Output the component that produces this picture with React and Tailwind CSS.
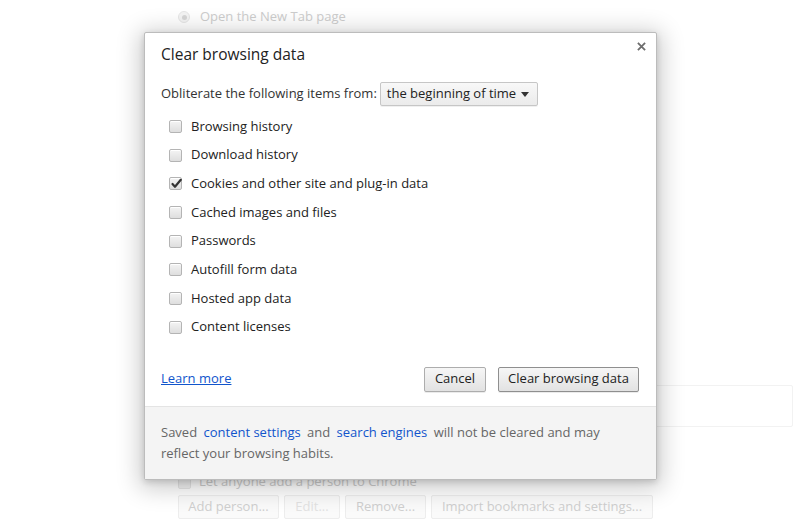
import React from 'react';

const items = [
  { label: 'Browsing history', checked: false },
  { label: 'Download history', checked: false },
  { label: 'Cookies and other site and plug-in data', checked: true },
  { label: 'Cached images and files', checked: false },
  { label: 'Passwords', checked: false },
  { label: 'Autofill form data', checked: false },
  { label: 'Hosted app data', checked: false },
  { label: 'Content licenses', checked: false },
];

const Checkbox = ({ checked }) => (
  <span className="relative w-[13px] h-[13px] rounded-[2px] border border-[#b4b4b4] bg-gradient-to-b from-[#f4f4f4] to-[#dedede] shadow-[inset_0_1px_0_#fff]">
    {checked && (
      <svg viewBox="0 0 13 13" className="absolute left-[0px] top-[-1px] w-[13px] h-[13px]">
        <path d="M2.5 7 L5 9.8 L10.8 2.8" fill="none" stroke="#333" strokeWidth="2.2" strokeLinecap="round" strokeLinejoin="round" />
      </svg>
    )}
  </span>
);

const FadedButton = ({ children, w }) => (
  <div className={`h-[24px] ${w} flex items-center justify-center border border-[#ededed] rounded-[2px] bg-[#fafafa] text-[#cfcfcf]`}>
    {children}
  </div>
);

const App = () => {
  return (
    <div className="relative w-[800px] h-[530px] overflow-hidden bg-white text-[13px] font-['Open_Sans',sans-serif]">
      {/* page behind the dialog */}
      <div className="pl-[178px] pt-[11px] text-[#cdcdcd]">
        <div className="flex items-center h-[12px]">
          <span className="w-[12px] h-[12px] rounded-full border border-[#e6e6e6] bg-[#f4f4f4] flex items-center justify-center">
            <span className="w-[5px] h-[5px] rounded-full bg-[#d6d6d6]" />
          </span>
          <span className="ml-[10px]">Open the New Tab page</span>
        </div>
        <div className="mt-[362px] ml-[477px] w-[138px] h-[42px] border border-[#f2f2f2] rounded-[2px]" />
        <div className="mt-[49px] flex items-center h-[12px]">
          <span className="w-[13px] h-[13px] rounded-[2px] border border-[#e6e6e6] bg-[#f2f2f2]" />
          <span className="ml-[8px]">Let anyone add a person to Chrome</span>
        </div>
        <div className="mt-[7px] flex gap-[5px]">
          <FadedButton w="w-[101px]">Add person...</FadedButton>
          <FadedButton w="w-[56px]"><span className="text-[#e2e2e2]">Edit...</span></FadedButton>
          <FadedButton w="w-[81px]">Remove...</FadedButton>
          <FadedButton w="w-[222px]">Import bookmarks and settings...</FadedButton>
        </div>
      </div>

      {/* dialog */}
      <div className="absolute left-[144px] top-[32px] w-[513px] bg-white border border-[#bcbcbc] rounded-[2px] shadow-[0_4px_23px_5px_rgba(0,0,0,0.2),0_2px_6px_rgba(0,0,0,0.15)] text-[#333]">
        <button className="absolute right-[8px] top-[6px] w-[14px] h-[14px] flex items-center justify-center">
          <svg viewBox="0 0 10 10" className="w-[9px] h-[9px]">
            <path d="M1 1 L9 9 M9 1 L1 9" stroke="#6d6d6d" strokeWidth="2" />
          </svg>
        </button>
        <div className="pl-[16px] pr-[17px] pt-[11px]">
          <h1 className="text-[15.5px] leading-[20px] text-[#222]">Clear browsing data</h1>
          <div className="mt-[18px] flex items-center gap-[3px] h-[24px]">
            <span>Obliterate the following items from:</span>
            <div className="h-[24px] w-[158px] flex items-center justify-between pl-[6px] pr-[8px] border border-[#c6c6c6] rounded-[2px] bg-gradient-to-b from-[#f8f8f8] to-[#ebebeb] shadow-[0_1px_0_rgba(0,0,0,0.06)] text-[#222]">
              <span>the beginning of time</span>
              <svg viewBox="0 0 8 5" className="w-[8px] h-[5px]">
                <path d="M0 0 L8 0 L4 5 Z" fill="#333" />
              </svg>
            </div>
          </div>
          <div className="mt-[6px]">
            {items.map((it) => (
              <div key={it.label} className="h-[28.7px] flex items-center pl-[8px] gap-[9px] text-[#222]">
                <Checkbox checked={it.checked} />
                <span>{it.label}</span>
              </div>
            ))}
          </div>
          <div className="mt-[25px] mb-[14px] flex items-center justify-between h-[25px]">
            <a className="text-[#15c] underline">Learn more</a>
            <div className="flex gap-[12px]">
              <button className="h-[25px] w-[62px] border border-[#adadad] rounded-[2px] bg-gradient-to-b from-[#f6f6f6] to-[#e2e2e2] shadow-[0_1px_0_rgba(0,0,0,0.08)] text-[#222]">Cancel</button>
              <button className="h-[25px] w-[141px] border border-[#8f8f8f] rounded-[2px] bg-gradient-to-b from-[#f6f6f6] to-[#e2e2e2] shadow-[0_1px_0_rgba(0,0,0,0.08)] text-[#222]">Clear browsing data</button>
            </div>
          </div>
        </div>
        <div className="border-t border-[#e4e4e4] bg-[#f4f4f4] px-[16px] pt-[15px] pb-[15px] leading-[21px] text-[#666]">
          Saved <a className="mx-[3px] text-[#15c]">content settings</a> and <a className="mx-[3px] text-[#15c]">search engines</a> will not be cleared and may reflect your browsing habits.
        </div>
      </div>
    </div>
  );
};

export default App;
